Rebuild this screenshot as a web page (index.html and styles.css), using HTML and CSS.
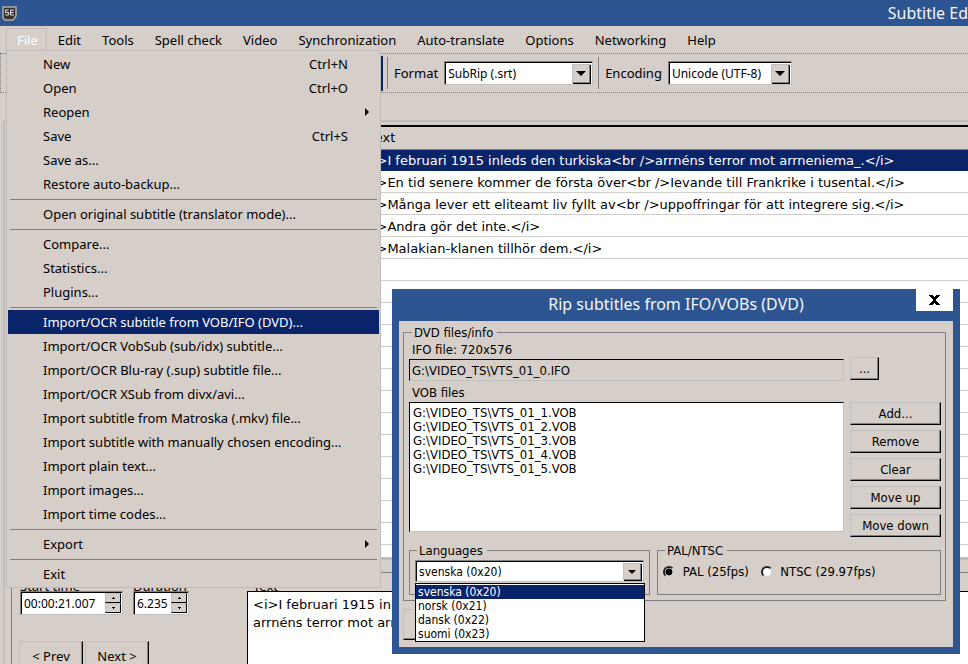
FILE: index.html
```html
<!DOCTYPE html>
<html lang="en">
<head>
    <meta charset="UTF-8">
    <meta name="viewport" content="width=device-width, initial-scale=1.0">
    <title>Subtitle Edit</title>
    <link rel="stylesheet" href="styles.css">
</head>
<body>
    <header class="titlebar">
        <svg class="app-icon" width="15" height="15" viewBox="0 0 15 15" aria-hidden="true">
            <path d="M1 1h13v9l-3 4H3l-2-2z" fill="#333" stroke="#b4aca0" stroke-width="1.5"/>
            <path d="M6.5 4H3.5v2.5h3V9h-3M12 4H8.5v5H12M8.5 6.5h3" fill="none" stroke="#e4e4e4"/>
        </svg>
        <span class="title">Subtitle Ed</span>
    </header>

    <nav class="menubar">
        <button class="open">File</button>
        <button>Edit</button>
        <button>Tools</button>
        <button>Spell check</button>
        <button>Video</button>
        <button>Synchronization</button>
        <button>Auto-translate</button>
        <button>Options</button>
        <button>Networking</button>
        <button>Help</button>
    </nav>

    <div class="toolbar">
        <span class="tool-edge"></span>
        <span class="divider"></span>
        <label for="format">Format</label>
        <div class="combo format">
            <select id="format"><option>SubRip (.srt)</option></select>
            <span class="arrow"><svg width="10" height="5" viewBox="0 0 10 5"><path d="M0 0h10L5 5z"/></svg></span>
        </div>
        <span class="divider"></span>
        <label for="encoding">Encoding</label>
        <div class="combo encoding">
            <select id="encoding"><option>Unicode (UTF-8)</option></select>
            <span class="arrow"><svg width="10" height="5" viewBox="0 0 10 5"><path d="M0 0h10L5 5z"/></svg></span>
        </div>
    </div>

    <main class="workspace">
        <div class="list">
            <table>
                <thead>
                    <tr><th>Text</th></tr>
                </thead>
                <tbody>
                    <tr class="selected"><td>&lt;i&gt;I februari 1915 inleds den turkiska&lt;br /&gt;arrnéns terror mot arrneniema_.&lt;/i&gt;</td></tr>
                    <tr><td>&lt;i&gt;En tid senere kommer de första över&lt;br /&gt;Ievande till Frankrike i tusental.&lt;/i&gt;</td></tr>
                    <tr><td>&lt;i&gt;Många lever ett eliteamt liv fyllt av&lt;br /&gt;uppoffringar för att integrere sig.&lt;/i&gt;</td></tr>
                    <tr><td>&lt;i&gt;Andra gör det inte.&lt;/i&gt;</td></tr>
                    <tr><td>&lt;i&gt;Malakian-klanen tillhör dem.&lt;/i&gt;</td></tr>
                </tbody>
            </table>
        </div>

        <div class="editor">
            <div class="timing">
                <div class="times">
                    <div class="time-field">
                        <label for="start">Start time</label>
                        <div class="spin start">
                            <input type="text" id="start" value="00:00:21.007">
                            <div class="spin-buttons">
                                <button aria-label="Later"><svg width="3" height="2" viewBox="0 0 3 2"><path d="M1 0h1v1h1v1H0V1h1z"/></svg></button>
                                <button aria-label="Earlier"><svg width="3" height="2" viewBox="0 0 3 2"><path d="M0 0h3v1H2v1H1V1H0z"/></svg></button>
                            </div>
                        </div>
                    </div>
                    <div class="time-field">
                        <label for="duration">Duration</label>
                        <div class="spin duration">
                            <input type="text" id="duration" value="6.235">
                            <div class="spin-buttons">
                                <button aria-label="Longer"><svg width="3" height="2" viewBox="0 0 3 2"><path d="M1 0h1v1h1v1H0V1h1z"/></svg></button>
                                <button aria-label="Shorter"><svg width="3" height="2" viewBox="0 0 3 2"><path d="M0 0h3v1H2v1H1V1H0z"/></svg></button>
                            </div>
                        </div>
                    </div>
                </div>
                <div class="steps">
                    <button class="button">&lt; Prev</button>
                    <button class="button">Next &gt;</button>
                </div>
            </div>
            <div class="text-field">
                <label for="text">Text</label>
                <textarea id="text">&lt;i&gt;I februari 1915 inleds den turkiska
arrnéns terror mot arrneniema_.&lt;/i&gt;</textarea>
            </div>
        </div>
    </main>

    <div class="menu">
        <button>New<kbd>Ctrl+N</kbd></button>
        <button>Open<kbd>Ctrl+O</kbd></button>
        <button class="sub">Reopen<svg width="4" height="8" viewBox="0 0 4 8"><path d="M0 0l4 4-4 4z"/></svg></button>
        <button>Save<kbd>Ctrl+S</kbd></button>
        <button>Save as...</button>
        <button>Restore auto-backup...</button>
        <hr>
        <button>Open original subtitle (translator mode)...</button>
        <hr>
        <button>Compare...</button>
        <button>Statistics...</button>
        <button>Plugins...</button>
        <hr>
        <button class="active">Import/OCR subtitle from VOB/IFO (DVD)...</button>
        <button>Import/OCR VobSub (sub/idx) subtitle...</button>
        <button>Import/OCR Blu-ray (.sup) subtitle file...</button>
        <button>Import/OCR XSub from divx/avi...</button>
        <button>Import subtitle from Matroska (.mkv) file...</button>
        <button>Import subtitle with manually chosen encoding...</button>
        <button>Import plain text...</button>
        <button>Import images...</button>
        <button>Import time codes...</button>
        <hr>
        <button class="sub">Export<svg width="4" height="8" viewBox="0 0 4 8"><path d="M0 0l4 4-4 4z"/></svg></button>
        <hr>
        <button>Exit</button>
    </div>

    <section class="dialog">
        <div class="dialog-title">
            <h2>Rip subtitles from IFO/VOBs (DVD)</h2>
            <button class="close" aria-label="Close"><svg width="11" height="10" viewBox="0 0 11 10"><path d="M0 0h4v1h1v1h1V1h1V0h4v1h-1v1H9v1H8v1H7v2h1v1h1v1h1v1h1v1H7V9H6V8H5v1H4v1H0V9h1V8h1V7h1V6h1V4H3V3H2V2H1V1H0z"/></svg></button>
        </div>
        <div class="dialog-body">
            <fieldset class="files">
                <legend>DVD files/info</legend>
                <label for="ifo">IFO file: 720x576</label>
                <div class="row ifo-row">
                    <input type="text" id="ifo" value="G:\VIDEO_TS\VTS_01_0.IFO" readonly>
                    <button class="button browse">...</button>
                </div>
                <label for="vobs">VOB files</label>
                <div class="row">
                    <select id="vobs" class="vobs" size="9">
                        <option>G:\VIDEO_TS\VTS_01_1.VOB</option>
                        <option>G:\VIDEO_TS\VTS_01_2.VOB</option>
                        <option>G:\VIDEO_TS\VTS_01_3.VOB</option>
                        <option>G:\VIDEO_TS\VTS_01_4.VOB</option>
                        <option>G:\VIDEO_TS\VTS_01_5.VOB</option>
                    </select>
                    <div class="actions">
                        <button class="button">Add...</button>
                        <button class="button">Remove</button>
                        <button class="button">Clear</button>
                        <button class="button">Move up</button>
                        <button class="button">Move down</button>
                    </div>
                </div>
                <div class="groups">
                    <fieldset class="languages">
                        <legend>Languages</legend>
                        <div class="combo">
                            <select aria-label="Languages">
                                <option>svenska (0x20)</option>
                                <option>norsk (0x21)</option>
                                <option>dansk (0x22)</option>
                                <option>suomi (0x23)</option>
                            </select>
                            <span class="arrow"><svg width="8" height="4" viewBox="0 0 8 4"><path d="M0 0h8L4 4z"/></svg></span>
                        </div>
                        <ul class="options">
                            <li class="current">svenska (0x20)</li>
                            <li>norsk (0x21)</li>
                            <li>dansk (0x22)</li>
                            <li>suomi (0x23)</li>
                        </ul>
                    </fieldset>
                    <fieldset class="standard">
                        <legend>PAL/NTSC</legend>
                        <input type="radio" name="standard" id="pal" checked>
                        <label for="pal">PAL (25fps)</label>
                        <input type="radio" name="standard" id="ntsc">
                        <label for="ntsc">NTSC (29.97fps)</label>
                    </fieldset>
                </div>
            </fieldset>
            <button class="button start-rip" aria-label="Start ripping"></button>
        </div>
    </section>
</body>
</html>
```
FILE: styles.css
```css
* {
    box-sizing: border-box;
}

body {
    margin: 0;
    height: 100vh;
    overflow: hidden;
    display: flex;
    flex-direction: column;
    position: relative;
    background: #d5cec9;
    color: #000;
    font-family: "Noto Sans", sans-serif;
    font-size: 13px;
}

button,
input,
select,
textarea {
    font: inherit;
    color: inherit;
    margin: 0;
    padding: 0;
    border: none;
    border-radius: 0;
    background: none;
    outline: none;
}

.titlebar {
    flex: none;
    height: 26px;
    padding-left: 2px;
    display: flex;
    align-items: center;
    justify-content: space-between;
    background: #2d5591;
    color: #f4f6fa;
    font-size: 16px;
}

.title {
    white-space: nowrap;
}

/* menu bar */
.menubar {
    flex: none;
    display: flex;
    height: 27px;
    padding: 2px 0 2px 6px;
}

.menubar button {
    padding: 0 10px 0 11px;
    white-space: nowrap;
}

.menubar .open {
    padding: 0 8px 0 10px;
    border: 1px solid #bfbcba;
    border-bottom: none;
    color: #fff;
}

/* toolbar */
.toolbar {
    flex: none;
    display: flex;
    align-items: center;
    height: 40px;
    padding-left: 380px;
    border: 1px dotted #85817e;
    border-right: none;
}

.tool-edge {
    width: 2px;
    height: 35px;
    background: #0a246a;
}

.divider {
    width: 1px;
    height: 32px;
    margin: 0 6px 0 4px;
    background: #85817e;
}

.combo {
    display: flex;
    height: 24px;
    background: #fff;
    border: 1px solid;
    border-color: #808080 #c0c0c0 #c0c0c0 #808080;
    box-shadow: inset 1px 1px #000;
    padding: 2px 2px 1px;
}

.combo select {
    flex: 1;
    min-width: 0;
    appearance: none;
    padding-left: 1px;
}

.arrow {
    width: 18px;
    display: flex;
    align-items: center;
    justify-content: center;
    background: #d5cec9;
    border: 1px solid;
    border-color: #c0c0c0 #808080 #808080 #c0c0c0;
    box-shadow: 1px 1px #000;
}

.toolbar .combo {
    margin: 0 1px 0 6px;
    font-size: 12px;
}

.format {
    width: 149px;
}

.encoding {
    width: 124px;
}

/* subtitle list */
.workspace {
    flex: 1;
    min-height: 0;
    display: flex;
    flex-direction: column;
    margin: 27px 0 0 3px;
    border-top: 2px solid #c0bfbd;
    border-left: 2px solid #c0bfbd;
    padding-top: 3px;
}

.list {
    flex: none;
    height: 435px;
    margin-left: 2px;
    border-top: 2px solid #000;
    border-bottom: 3px solid #c0bfbd;
    background: repeating-linear-gradient(#fff 0 21px, #d0cdca 21px 22px);
}

.list table {
    width: 100%;
    border-collapse: collapse;
    font-family: "DejaVu Sans", sans-serif;
    font-size: 13px;
}

.list th,
.list td {
    height: 22px;
    padding: 1px 0 0 355px;
    text-align: left;
    font-weight: normal;
    line-height: 20px;
    white-space: nowrap;
}

.list th {
    padding-left: 362px;
    background: #d5cec9;
    border-bottom: 1px solid #808080;
}

.selected {
    background: #0a246a;
    color: #fff;
}

/* editor below the list */
.editor {
    flex: 1;
    min-height: 0;
    display: flex;
    gap: 40px;
    margin: 12px 0 0 6px;
    padding: 6px 0 0 8px;
    border-top: 1px solid #808080;
    border-left: 1px solid #808080;
}

.timing {
    width: 187px;
    flex: none;
}

.times {
    display: flex;
    gap: 10px;
}

.time-field label,
.text-field label {
    display: block;
    margin-bottom: -2px;
    line-height: 14px;
}

.spin {
    display: flex;
    height: 24px;
    padding: 1px;
    background: #fff;
    border: 1px solid;
    border-color: #808080 #c0c0c0 #c0c0c0 #808080;
    box-shadow: inset 1px 1px #000;
    font-size: 12px;
}

.start {
    width: 103px;
}

.duration {
    width: 56px;
}

.spin input {
    flex: 1;
    min-width: 0;
    padding-left: 2px;
}

.spin-buttons {
    width: 16px;
    display: flex;
    flex-direction: column;
}

.spin-buttons button {
    flex: 1;
    display: flex;
    align-items: center;
    justify-content: center;
    background: #d5cec9;
    border: 1px solid;
    border-color: #c0c0c0 #000 #000 #c0c0c0;
}

.steps {
    display: flex;
    gap: 2px;
    margin: 26px 0 0 -1px;
}

.steps .button {
    width: 64px;
    height: 28px;
    padding-top: 1px;
}

.text-field {
    flex: 1;
    display: flex;
    flex-direction: column;
}

.text-field label {
    padding-left: 6px;
}

.text-field textarea {
    flex: 1;
    resize: none;
    padding: 4px 5px 0;
    background: #fff;
    border: 1px solid #000;
    border-width: 1px 0 0 1px;
    font-family: "DejaVu Sans", sans-serif;
    font-size: 13px;
    line-height: 18px;
}

.button {
    background: #d5cec9;
    border: 1px solid;
    border-color: #c0c0c0 #000 #000 #c0c0c0;
    box-shadow: inset -1px -1px #808080;
    white-space: nowrap;
}

/* File menu */
.menu {
    position: absolute;
    left: 6px;
    top: 50px;
    width: 375px;
    padding: 1px;
    background: #d5cec9;
    border: 1px solid #bfbcba;
}

.menu button {
    display: flex;
    align-items: center;
    justify-content: space-between;
    width: 100%;
    height: 24px;
    padding: 0 31px 0 35px;
    text-align: left;
}

.menu .sub {
    padding-right: 10px;
}

.menu kbd {
    font: inherit;
}

.menu hr {
    height: 1px;
    margin: 3px 2px 2px;
    border: none;
    background: #808080;
}

.menu .active {
    background: #0a246a;
    color: #fff;
}

/* DVD rip window */
.dialog {
    position: absolute;
    left: 392px;
    right: 8px;
    top: 289px;
    padding: 0 7px 7px;
    background: #2d5591;
    font-family: "DejaVu Sans Condensed", "Noto Sans", sans-serif;
    font-size: 13px;
}

.dialog-title {
    display: flex;
    align-items: flex-start;
    height: 32px;
    color: #f4f6fa;
}

.dialog-title h2 {
    flex: 1;
    margin: 0 0 0 37px;
    text-align: center;
    font-family: "Noto Sans", sans-serif;
    font-size: 16px;
    font-weight: normal;
    line-height: 31px;
}

.close {
    width: 37px;
    height: 22px;
    background: #fff;
}

.dialog-body {
    padding: 4px 7px 7px 4px;
    background: #d5cec9;
}

fieldset {
    margin: 0;
    min-width: 0;
    border: 1px solid #808080;
}

legend {
    padding: 0 4px 0 2px;
    line-height: 15px;
}

.files {
    padding: 3px 4px 5px 5px;
}

.files > legend {
    margin-left: 3px;
}

.files > label {
    display: block;
    padding-left: 3px;
    line-height: 14px;
}

.row {
    display: flex;
    gap: 6px;
}

.ifo-row {
    margin-bottom: 5px;
}

.ifo-row input {
    flex: 1;
    height: 22px;
    margin-top: 2px;
    padding-left: 2px;
    border: 1px solid;
    border-color: #000 #c0c0c0 #c0c0c0 #000;
}

.browse {
    width: 29px;
    height: 23px;
    margin-right: 62px;
}

.vobs {
    flex: 1;
    height: 130px;
    margin-top: 2px;
    padding: 2px;
    background: #fff;
    border: 1px solid;
    border-color: #000 #c0c0c0 #c0c0c0 #000;
    overflow: hidden;
}

.vobs option {
    height: 14px;
    min-height: 14px;
    padding: 0 1px;
    line-height: 14px;
}

.actions {
    width: 91px;
    margin-top: 2px;
    display: flex;
    flex-direction: column;
    gap: 5px;
}

.actions .button {
    height: 23px;
}

.groups {
    display: grid;
    grid-template-columns: 241fr 284fr;
    gap: 7px;
    margin-top: 6px;
}

.groups fieldset {
    height: 52px;
    padding: 2px 5px;
}

.groups legend {
    margin-left: 2px;
}

.languages {
    position: relative;
}

.languages .combo {
    height: 22px;
    font-size: 12px;
}

.options {
    position: absolute;
    z-index: 1;
    left: 5px;
    right: 4px;
    top: 25px;
    margin: 0;
    padding: 1px 0 0;
    list-style: none;
    background: #fff;
    border: 1px solid #000;
    font-size: 12px;
}

.options li {
    padding-left: 2px;
    line-height: 14px;
}

.options .current {
    background: #0a246a;
    color: #fff;
}

.standard input {
    appearance: none;
    width: 12px;
    height: 12px;
    margin: 0 4px 0 0;
    vertical-align: middle;
    background: #fff;
    border: 2px solid;
    border-color: #202020 #d0d0d0 #d0d0d0 #202020;
    border-radius: 50%;
}

.standard input:checked {
    background: radial-gradient(circle, #000 3px, #fff 4px);
}

.standard label {
    line-height: 24px;
    margin-right: 8px;
    vertical-align: middle;
}

.start-rip {
    display: block;
    width: 100px;
    height: 31px;
    margin-top: 8px;
}
```
